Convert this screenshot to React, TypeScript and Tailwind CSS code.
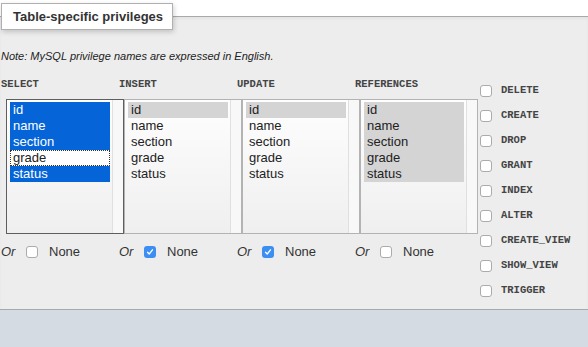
const fields = ['id', 'name', 'section', 'grade', 'status']

type Col = {
  label: string
  selected: string[]
  focused?: string
  active?: boolean
  none: boolean
}

const columns: Col[] = [
  { label: 'SELECT', selected: ['id', 'name', 'section', 'status'], focused: 'grade', active: true, none: false },
  { label: 'INSERT', selected: ['id'], none: true },
  { label: 'UPDATE', selected: ['id'], none: true },
  { label: 'REFERENCES', selected: fields, none: false },
]

const privileges = ['DELETE', 'CREATE', 'DROP', 'GRANT', 'INDEX', 'ALTER', 'CREATE_VIEW', 'SHOW_VIEW', 'TRIGGER']

function Checkbox({ checked }: { checked?: boolean }) {
  if (checked) {
    return (
      <span className="w-[12px] h-[12px] rounded-[3px] bg-[#3d8ef3] flex items-center justify-center shrink-0">
        <svg width="8" height="8" viewBox="0 0 8 8">
          <path d="M1.5 4.2 L3.2 6 L6.5 1.8" fill="none" stroke="white" strokeWidth="1.3" strokeLinecap="round" strokeLinejoin="round" />
        </svg>
      </span>
    )
  }
  return <span className="w-[12px] h-[12px] rounded-[3px] bg-white border border-[#ababab] shrink-0" />
}

function ListBox({ col }: { col: Col }) {
  return (
    <div
      className={`ml-[5px] w-[118px] h-[135px] flex border bg-gradient-to-b from-[#fefefe] to-[#efefef] ${
        col.active ? 'border-[#5e5e5e]' : 'border-[#b3b3b3]'
      }`}
    >
      <div className="flex-1 pl-[3px] pr-[2px] pt-[2px]">
        {fields.map((f) => {
          const sel = col.selected.includes(f)
          const focus = col.focused === f
          let cls = 'text-[#222]'
          if (sel && col.active) cls = 'bg-[#0565d8] text-white'
          else if (sel) cls = 'bg-[#d4d4d4] text-[#222]'
          else if (focus) cls = 'bg-white text-[#222] outline-1 outline-dotted outline-[#333] -outline-offset-1'
          return (
            <div key={f} className={`h-[16px] leading-[16px] pl-[3px] text-[13px] ${cls}`}>
              {f}
            </div>
          )
        })}
      </div>
      <div className="w-[11px] border-l border-[#e0e0e0] bg-[#f8f8f8]" />
    </div>
  )
}

export default function App() {
  return (
    <div className="w-[588px] h-[347px] bg-[#d4dbe2] overflow-hidden" style={{ fontFamily: '"Liberation Sans", Arial, sans-serif' }}>
      <div className="h-[16px] bg-white" />
      <div className="relative h-[294px] bg-[#ededed] border-t border-b border-[#a9a9a9] shadow-[inset_0_2px_3px_rgba(0,0,0,0.04)]">
        {/* legend */}
        <div className="absolute -top-[14px] left-[1px] w-[172px] h-[27px] bg-white border border-[#b0b0b0] shadow-[1px_2px_5px_rgba(0,0,0,0.18)] flex items-center pl-[11px] text-[13px] font-bold text-[#333]">
          Table-specific privileges
        </div>

        <p className="pt-[33px] pl-[1px] text-[11px] leading-[13px] italic text-[#222]">
          Note: MySQL privilege names are expressed in English.
        </p>

        <div className="flex mt-[15px]">
          <div className="flex pl-[1px]">
            {columns.map((col) => (
              <div key={col.label} className="w-[118px]">
                <div className="h-[21px] text-[10.5px] leading-[12px] font-bold text-[#444]" style={{ fontFamily: '"Liberation Mono", "Courier New", monospace' }}>
                  {col.label}
                </div>
                <ListBox col={col} />
                <div className="flex items-center h-[14px] mt-[11px] text-[13px] text-[#333]">
                  <span className="italic w-[25px]">Or</span>
                  <Checkbox checked={col.none} />
                  <span className="ml-[11px]">None</span>
                </div>
              </div>
            ))}
          </div>

          <div className="ml-[7px] flex flex-col">
            {privileges.map((p) => (
              <div key={p} className="h-[25px] flex items-center gap-[9px]">
                <Checkbox />
                <span className="text-[10.5px] font-bold text-[#444]" style={{ fontFamily: '"Liberation Mono", "Courier New", monospace' }}>
                  {p}
                </span>
              </div>
            ))}
          </div>
        </div>
      </div>
    </div>
  )
}
